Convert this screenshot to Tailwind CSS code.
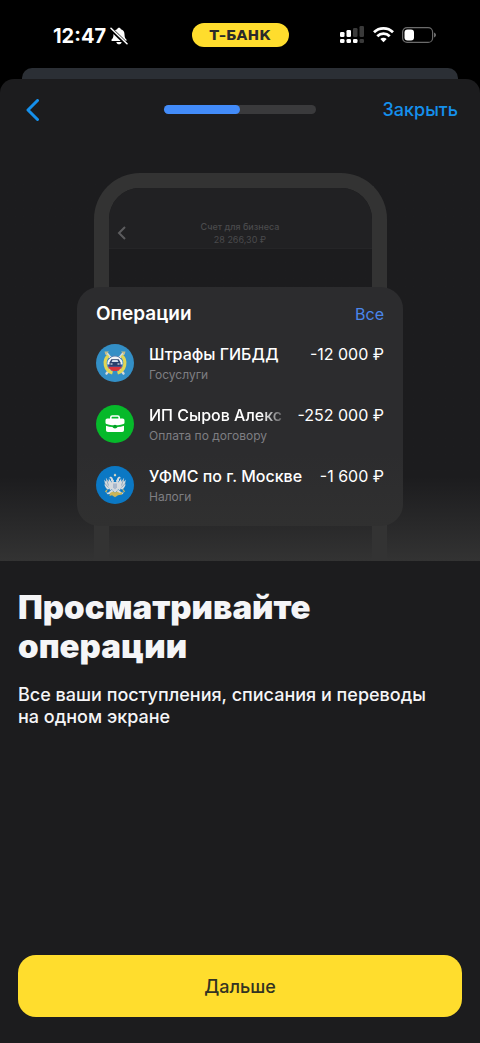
<!DOCTYPE html>
<html lang="ru">
<head>
    <meta charset="UTF-8">
    <meta name="viewport" content="width=device-width, initial-scale=1.0">
    <title>Т-Банк</title>
    <script src="https://cdn.jsdelivr.net/npm/@tailwindcss/browser@4"></script>
</head>
<body class="min-h-screen flex flex-col bg-black text-white font-['Inter','Liberation_Sans',sans-serif]">

    <!-- Status bar -->
    <div class="grid grid-cols-[1fr_auto_1fr] items-center h-[68px] pt-[2px]">
        <div class="flex items-center gap-1 pt-px pl-[53px]">
            <span class="text-[20px] leading-6 font-bold">12:47</span>
            <svg class="w-[18px] h-[18px]" viewBox="0 0 18 18" fill="none">
                <path d="M9 .8c1 0 1.700.6 1.900 1.500 2.300.7 3.600 2.600 3.600 5 0 3.400.8 4.300 1.900 5.200.4.400.3 1.500-.6 1.500H2.200c-.9 0-1-1.100-.6-1.500C2.700 11.600 3.500 10.700 3.500 7.300c0-2.400 1.300-4.300 3.600-5C7.300 1.400 8 .8 9 .8z" fill="#fff"/>
                <path d="M6.300 15h5.400c-.3 1.400-1.400 2.300-2.700 2.300S6.600 16.400 6.300 15z" fill="#fff"/>
                <path d="M.5 1.500l16 15.500" stroke="#000" stroke-width="3.800"/>
                <path d="M1 1.300l16 15.400" stroke="#fff" stroke-width="1.500" stroke-linecap="round"/>
            </svg>
        </div>
        <div class="flex items-center justify-center w-[97px] h-6 rounded-full bg-[#ffdd2d] text-[#2a2a2a] font-['DejaVu_Sans',sans-serif] text-[14px] font-bold">Т–БАНК</div>
        <div class="flex items-center justify-end gap-2 pr-[44px]">
            <svg class="w-[25px] h-[18px]" viewBox="0 0 25 18">
                <g fill="#fff">
                    <rect x="0" y="6" width="4.500" height="5" rx="1.300"/>
                    <rect x="6.500" y="4" width="4.500" height="7" rx="1.300"/>
                    <rect x="0" y="13" width="4.500" height="4" rx="1.300"/>
                    <rect x="6.500" y="13" width="4.500" height="4" rx="1.300"/>
                    <rect x="13" y="13" width="4.500" height="4" rx="1.300"/>
                </g>
                <g fill="#3a3a3a">
                    <rect x="13" y="2" width="4.500" height="9" rx="1.300"/>
                    <rect x="19.500" y="0" width="4.500" height="11" rx="1.300"/>
                    <rect x="19.500" y="13" width="4.500" height="4" rx="1.300"/>
                </g>
            </svg>
            <svg class="w-[21px] h-[16px]" viewBox="0 0 21 16" fill="none" stroke="#fff" stroke-width="2.800">
                <path d="M1 5.300a13.600 13.600 0 0 1 19 0"/>
                <path d="M4.300 9.200a8.800 8.800 0 0 1 12.400 0"/>
                <path d="M10.500 15.300l-3.200-3.200a4.600 4.600 0 0 1 6.400 0z" fill="#fff" stroke="none"/>
            </svg>
            <svg class="w-[34px] h-4" viewBox="0 0 34 16">
                <rect x=".6" y=".6" width="30" height="14.800" rx="4.500" fill="none" stroke="#6b6b6b" stroke-width="1.200"/>
                <rect x="2.500" y="2.500" width="9.500" height="11" rx="3" fill="#fff"/>
                <path d="M32 5.500c1.200.4 2 1.400 2 2.500s-.8 2.100-2 2.500z" fill="#6b6b6b"/>
            </svg>
        </div>
    </div>

    <!-- Edge of the screen under the sheet -->
    <div class="mx-[22px] h-[11px] rounded-t-[10px] bg-[#2b2f35]"></div>

    <main class="flex-1 flex flex-col rounded-t-[14px] bg-[#1c1c1e]">
        <header class="grid grid-cols-[1fr_auto_1fr] items-center h-[61px] px-[22px]">
            <button type="button" aria-label="Назад" class="justify-self-start p-1">
                <svg class="w-[14px] h-[22px]" viewBox="0 0 14 22" fill="none" stroke="#1590ec" stroke-width="3" stroke-linecap="round" stroke-linejoin="round">
                    <path d="M11.500 1.500L2 11l9.500 9.500"/>
                </svg>
            </button>
            <div class="w-[152px] h-[9px] rounded-full bg-[#3a3a3c]">
                <div class="w-1/2 h-full rounded-full bg-[#428bf9]"></div>
            </div>
            <button type="button" class="justify-self-end text-[18px] leading-6 font-medium text-[#1590ec]">Закрыть</button>
        </header>

        <!-- Phone frame with the operations card in front of it -->
        <section class="grid justify-center pt-[33px] bg-linear-to-b from-[#1c1c1e] from-80% to-[#333333]">
            <div class="col-start-1 row-start-1 justify-self-center w-[293px] rounded-t-[46px] border-[15px] border-b-0 border-[#333333] overflow-hidden">
                <div class="grid grid-cols-[1fr_auto_1fr] items-center h-[61px] pt-[30px] px-[8px] bg-[#212123] border-b border-[#252527] text-[#4a4a4c]">
                    <svg class="w-[9px] h-[14px]" viewBox="0 0 9 14" fill="none" stroke="#5c5c5e" stroke-width="2">
                        <path d="M8 1L2 7l6 6"/>
                    </svg>
                    <div class="text-center text-[9px] leading-[13px]">
                        <div class="font-medium">Счет для бизнеса</div>
                        <div>28 266,30 ₽</div>
                    </div>
                </div>
            </div>

            <div class="col-start-1 row-start-1 w-[326px] h-[239px] mt-[114px] mb-[35px] px-[19px] pt-[15px] rounded-[22px] bg-linear-to-b from-[#2c2c2e] from-70% to-[#303030]">
                <div class="flex items-center justify-between">
                    <h2 class="text-[19px] leading-6 font-semibold">Операции</h2>
                    <a href="#" class="text-[16px] leading-6 text-[#4a86ec]">Все</a>
                </div>

                <ul class="flex flex-col gap-[20px] mt-[17px]">
                    <li class="flex items-start gap-[15px]">
                        <svg class="w-[38px] h-[38px] mt-px shrink-0" viewBox="0 0 38 38">
                            <circle cx="19" cy="19" r="19" fill="#338fc6"/>
                            <g stroke="#d8dde0" stroke-width="2.400" stroke-linecap="round">
                                <path d="M10.500 29.500L27 9.500M27.500 29.500L11 9.500"/>
                            </g>
                            <path d="M8.500 7.500l4.500 0-3.500 3.500zM29.500 7.500l-4.500 0 3.500 3.500z" fill="#c8bd86"/>
                            <path d="M12.500 11.500A10.300 10.300 0 0 0 16.500 29M25.500 11.500A10.300 10.300 0 0 1 21.500 29" fill="none" stroke="#e2d654" stroke-width="3.200"/>
                            <circle cx="19" cy="19.500" r="7.600" fill="#f1f2f4"/>
                            <path d="M12.600 15.500a7.600 7.600 0 0 1 12.800 0" fill="none" stroke="#5d7fae" stroke-width="1"/>
                            <path d="M11.500 20.500h15l-.8 2.500H12.300z" fill="#3159a6"/>
                            <path d="M12.100 22.700h13.800a7.600 7.600 0 0 1-13.800 0z" fill="#d8343c"/>
                            <path d="M13.500 18.500l1.800-3.300h7.400l1.800 3.300v3.700h-11z" fill="#27406d"/>
                            <path d="M15.500 18l1-2h5l1 2z" fill="#cfdcec"/>
                            <path d="M14.500 20h2M21.500 20h2" stroke="#fff" stroke-width="1.200"/>
                        </svg>
                        <div class="flex-1 min-w-0">
                            <div class="text-[16px] leading-[22px] font-medium whitespace-nowrap">Штрафы ГИБДД</div>
                            <div class="text-[12px] leading-[19px] text-[#7e7e82]">Госуслуги</div>
                        </div>
                        <div class="text-[16px] leading-[22px] whitespace-nowrap">-12 000 ₽</div>
                    </li>
                    <li class="flex items-start gap-[15px]">
                        <svg class="w-[38px] h-[38px] mt-px shrink-0" viewBox="0 0 38 38">
                            <circle cx="19" cy="19" r="19" fill="#06b92a"/>
                            <path d="M14.800 14v-1.600c0-.9.5-1.400 1.400-1.400h5.600c.9 0 1.400.5 1.400 1.400V14" fill="none" stroke="#fff" stroke-width="1.600"/>
                            <path d="M11.500 13.500h15c1.300 0 2 .7 2 2v2.300c0 .6-.3 1-.9 1.200-1.800.7-3.700 1.100-5.600 1.300h-6c-1.900-.2-3.800-.6-5.600-1.300-.6-.2-.9-.6-.9-1.200v-2.300c0-1.300.7-2 2-2z" fill="#fff"/>
                            <path d="M10 20.800c2.100.8 4.300 1.200 6.500 1.300.3.800 1.200 1.400 2.500 1.400s2.200-.6 2.500-1.400c2.200-.1 4.400-.5 6.500-1.300V25c0 1.300-.6 1.900-1.900 1.900H11.900C10.600 26.900 10 26.300 10 25z" fill="#fff"/>
                            <circle cx="19" cy="21.200" r="1.500" fill="#06972a"/>
                        </svg>
                        <div class="flex-1 min-w-0">
                            <div class="w-[133px] overflow-hidden text-[16px] leading-[22px] font-medium whitespace-nowrap mask-r-from-85% mask-r-to-105%">ИП Сыров Алекс</div>
                            <div class="text-[12px] leading-[19px] text-[#7e7e82]">Оплата по договору</div>
                        </div>
                        <div class="text-[16px] leading-[22px] whitespace-nowrap">-252 000 ₽</div>
                    </li>
                    <li class="flex items-start gap-[15px]">
                        <svg class="w-[38px] h-[38px] mt-px shrink-0" viewBox="0 0 38 38">
                            <circle cx="19" cy="19" r="19" fill="#0b78c4"/>
                            <!-- two-headed eagle -->
                            <path d="M19 7.500l1.300 1.500-.6 1.200h-1.400l-.6-1.200z" fill="#e3dcc0"/>
                            <g fill="#d5dade">
                                <path d="M18 14.500c-1.300-.7-1-3-2.800-3.700-1.200-.3-2 .5-1.800 1.400l1.300.2c.7.900-.3 1.600.6 2.800l2 2.300zM20 14.500c1.300-.7 1-3 2.800-3.700 1.200-.3 2 .5 1.800 1.400l-1.300.2c-.7.900.3 1.600-.6 2.800l-2 2.300z"/>
                                <path d="M16.500 17.500l-3.700-5-.2 3.200-2.700-4 .2 4-1.900-2.200.9 5.300-1-.5 1.900 3.800 1.800 1.700 1.700-1.200.4 2 2.200-1.500 1.400-1.500zM21.500 17.500l3.700-5 .2 3.200 2.700-4-.2 4 1.900-2.200-.9 5.300 1-.5-1.900 3.800-1.800 1.700-1.700-1.200-.4 2-2.200-1.500-1.400-1.500z"/>
                                <path d="M15.500 16h7v7L19 27l-3.500-4z"/>
                                <path d="M16 23.500l-4 3.200-2-.5 1.500 2 3-.2 3-2.500zM22 23.500l4 3.200 2-.5-1.500 2-3-.2-3-2.500z"/>
                            </g>
                            <path d="M10.500 13.500l2 6M27.500 13.500l-2 6M8.500 17l4 4.500M29.500 17l-4 4.500" stroke="#5f88a8" stroke-width=".6"/>
                            <path d="M17 17.500h4v4l-2 2-2-2z" fill="#a9b8cc"/>
                            <path d="M14 27l3-1.500 2 1 2-1 3 1.500 2.500-1.500-.6 3-3.900.8-3 2-3-2-2.500.7z" fill="#c9b559"/>
                            <path d="M9.500 26l1.500-2M28.500 26l-1.500-2.500" stroke="#c9b559" stroke-width="1.300"/>
                        </svg>
                        <div class="flex-1 min-w-0">
                            <div class="text-[16px] leading-[22px] font-medium whitespace-nowrap">УФМС по г. Москве</div>
                            <div class="text-[12px] leading-[19px] text-[#7e7e82]">Налоги</div>
                        </div>
                        <div class="text-[16px] leading-[22px] whitespace-nowrap">-1 600 ₽</div>
                    </li>
                </ul>
            </div>
        </section>

        <div class="px-[18px] pt-[27px]">
            <h1 class="text-[33px] leading-[39px] font-black text-[#f5f5f7]">Просматривайте<br>операции</h1>
            <p class="mt-[18px] text-[18px] leading-[22px] font-medium text-[#f5f5f7]">Все ваши поступления, списания и переводы<br>на одном экране</p>
        </div>

        <div class="mt-auto px-[18px] pb-[26px]">
            <button type="button" class="w-full h-[62px] rounded-[18px] bg-[#ffdd2d] text-[18px] font-medium text-[#333322]">Дальше</button>
        </div>
    </main>

</body>
</html>
